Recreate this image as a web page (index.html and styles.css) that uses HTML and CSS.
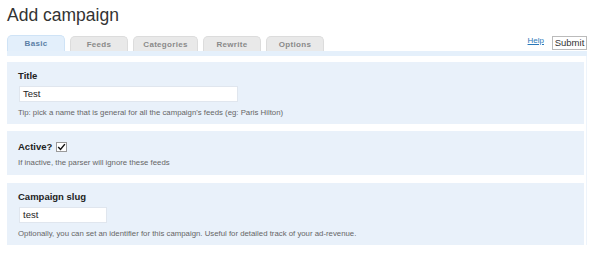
FILE: index.html
```html
<!DOCTYPE html>
<html>
<head>
<meta charset="utf-8">
<link rel="stylesheet" href="styles.css">
</head>
<body>
<div class="page">
  <h1 class="heading">Add campaign</h1>
  <div class="tabbar">
    <div class="tabs">
      <span class="tab active">Basic</span>
      <span class="tab">Feeds</span>
      <span class="tab wide">Categories</span>
      <span class="tab">Rewrite</span>
      <span class="tab">Options</span>
    </div>
    <div class="actions">
      <a class="help" href="#">Help</a>
      <button class="submit">Submit</button>
    </div>
  </div>
  <div class="panel">
    <div class="section">
      <div class="label">Title</div>
      <div class="input title-input">Test</div>
      <div class="hint">Tip: pick a name that is general for all the campaign's feeds (eg: Paris Hilton)</div>
    </div>
    <div class="section compact">
      <div class="label row">Active? <span class="check"><svg width="11" height="10" viewBox="0 0 11 10"><path d="M1.5 5 L4.3 8 L9.6 1.5" fill="none" stroke="#111" stroke-width="1.8"/></svg></span></div>
      <div class="hint">If inactive, the parser will ignore these feeds</div>
    </div>
    <div class="section">
      <div class="label">Campaign slug</div>
      <div class="input slug-input">test</div>
      <div class="hint">Optionally, you can set an identifier for this campaign. Useful for detailed track of your ad-revenue.</div>
    </div>
  </div>
</div>
</body>
</html>
```
FILE: styles.css
```css
html, body {
  margin: 0;
  padding: 0;
  background: #fff;
  font-family: "Liberation Sans", Arial, sans-serif;
  color: #222;
}
.page {
  padding: 3px 4px 0 7px;
}
.heading {
  margin: 0;
  font-size: 17.5px;
  font-weight: normal;
  line-height: 24px;
  color: #333;
  height: 30px;
}
.tabbar {
  display: flex;
  align-items: flex-end;
  justify-content: space-between;
  border-bottom: 5px solid #e5f0fb;
  height: 18px;
}
.tabs {
  display: flex;
  gap: 4px;
  align-items: flex-end;
}
.tab {
  box-sizing: border-box;
  width: 58px;
  height: 15px;
  border: 1px solid #dcdcdc;
  border-bottom: none;
  border-radius: 5px 5px 0 0;
  background: #e9e9e9;
  color: #8a8a8a;
  font-size: 8px;
  font-weight: bold;
  letter-spacing: 0.3px;
  text-align: center;
  line-height: 15px;
  margin-right: 1px;
}
.tab.wide { width: 65px; }
.tab.active {
  height: 16px;
  background: #e3effb;
  border-color: #cfe3f6;
  color: #5b7fa6;
}
.actions {
  display: flex;
  align-items: flex-end;
  gap: 8px;
  padding-bottom: 1px;
}
.help {
  font-size: 8px;
  color: #2a78b8;
  text-decoration: underline;
  margin-bottom: 5px;
}
.submit {
  box-sizing: border-box;
  height: 14px;
  width: 35px;
  padding: 0;
  font-family: "Liberation Sans", Arial, sans-serif;
  font-size: 9.5px;
  color: #333;
  background: #fff;
  border: 1px solid #bbb;
  border-radius: 0;
  line-height: 12px;
}
.panel {
  padding-top: 6px;
  width: 580px;
  border-right: 1px solid #eef4fb;
  box-sizing: border-box;
}
.section {
  width: 577px;
  box-sizing: border-box;
  background: #e9f1fa;
  padding: 8px 11px 5px;
  margin-bottom: 7px;
}
.section.compact {
  padding: 10px 11px 6px;
  margin-bottom: 8px;
}
.label {
  font-size: 9.5px;
  font-weight: bold;
  line-height: 12px;
  color: #222;
  margin-bottom: 4px;
}
.label.row {
  display: flex;
  align-items: center;
  gap: 4px;
}
.check {
  display: inline-flex;
  align-items: center;
  justify-content: center;
  box-sizing: border-box;
  width: 11px;
  height: 10px;
  background: #fff;
  border: 1px solid #999;
}
.input {
  box-sizing: border-box;
  height: 16px;
  background: #fff;
  border: 1px solid #e0e6ee;
  font-size: 9.5px;
  line-height: 14px;
  padding-left: 3px;
  color: #222;
  margin-left: 1px;
}
.title-input { width: 219px; }
.slug-input { width: 88px; }
.hint {
  font-size: 7.8px;
  line-height: 12px;
  color: #666;
  margin-top: 5px;
}
.compact .hint { margin-top: 1px; }
```
